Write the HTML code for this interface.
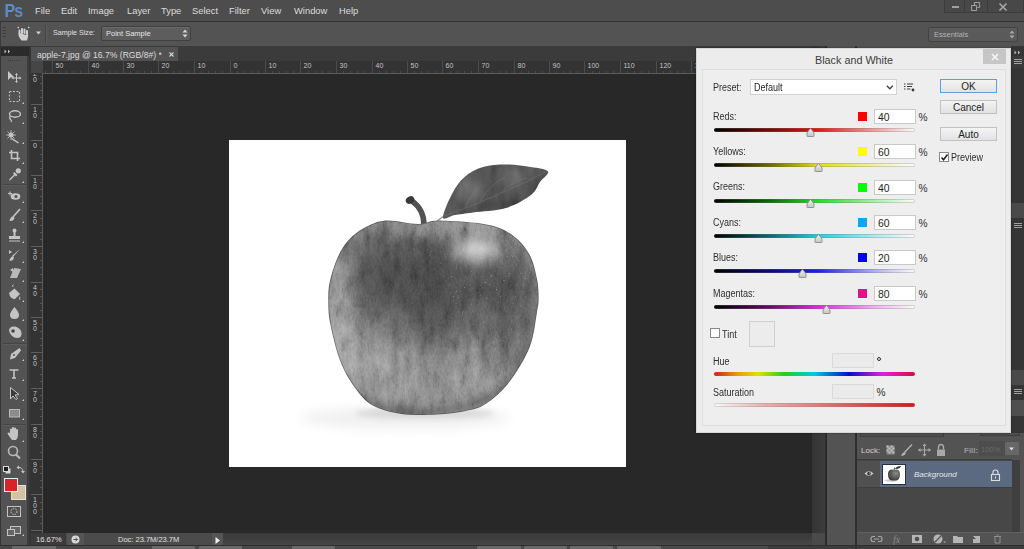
<!DOCTYPE html>
<html><head><meta charset="utf-8">
<style>
*{margin:0;padding:0;box-sizing:border-box}
html,body{width:1024px;height:549px;overflow:hidden;background:#282828;font-family:"Liberation Sans",sans-serif;position:relative}
.a{position:absolute}
.t{position:absolute;white-space:pre;line-height:1}
.menu .t{color:#dcdcdc;font-size:9.4px;top:6px}
.rl{position:absolute;font-size:7px;color:#c4c4c4;line-height:1;white-space:pre}
.dlg .t{color:#2b2b2b;font-size:9px}
svg{position:absolute;overflow:visible}
</style></head><body>
<!-- menu bar -->
<div class="a menu" style="left:0;top:0;width:1024px;height:21px;background:#4d4d4d">
  <div class="t" style="left:4.5px;top:2.8px;font-size:16px;font-weight:bold;color:#5f8cc0;letter-spacing:-0.8px;transform:scaleY(1.1);transform-origin:0 0">Ps</div>
  <div class="t" style="left:35px">File</div>
  <div class="t" style="left:61px">Edit</div>
  <div class="t" style="left:88px">Image</div>
  <div class="t" style="left:127px">Layer</div>
  <div class="t" style="left:161px">Type</div>
  <div class="t" style="left:192px">Select</div>
  <div class="t" style="left:229px">Filter</div>
  <div class="t" style="left:261px">View</div>
  <div class="t" style="left:294px">Window</div>
  <div class="t" style="left:339px">Help</div>
</div>
<div class="a" style="left:0;top:21px;width:1024px;height:1px;background:#343434"></div>
<!-- options bar -->
<div class="a" style="left:0;top:22px;width:1024px;height:24px;background:#535353"></div>
<!-- options bar content -->
<div class="a" style="left:0;top:22px;width:1px;height:24px;background:#3a3a3a"></div>
<div class="a" style="left:3px;top:27px;width:3px;height:1px;background:#3b3b3b;box-shadow:0 3px 0 #3b3b3b,0 6px 0 #3b3b3b,0 9px 0 #3b3b3b"></div>
<svg style="left:16px;top:26px" width="16" height="16" viewBox="0 0 16 16">
  <path d="M3.5 7.5 L3.5 4.5 M6 7 L6 3 M8.5 7 L8.5 3.5 M11 7.5 L11 5" stroke="#cfcfcf" stroke-width="2" stroke-linecap="round"/>
  <path d="M2.5 7.5 Q2 10 4 12.5 L5.5 14.5 L11 14.5 Q12.5 11 12 7 L11 7 L10 9 L3.5 7 Z" fill="#cfcfcf"/>
  <path d="M1 1.5 L3 0.5 L3 2.5Z M14 1.5 L12 0.5 L12 2.5Z" fill="#cfcfcf"/>
</svg>
<svg style="left:36px;top:31px" width="6" height="4"><path d="M0 0.5 L5 0.5 L2.5 3.5Z" fill="#d0d0d0"/></svg>
<div class="a" style="left:45px;top:25px;width:1px;height:18px;background:#434343;box-shadow:1px 0 0 #5f5f5f"></div>
<div class="t" style="left:53px;top:30px;font-size:7.1px;color:#e0e0e0">Sample Size:</div>
<div class="a" style="left:101px;top:26px;width:90px;height:15px;background:#5d5d5d;border:1px solid #404040;border-radius:2px;box-shadow:inset 0 1px 0 #6a6a6a"></div>
<div class="t" style="left:106px;top:30px;font-size:7.5px;color:#e6e6e6">Point Sample</div>
<svg style="left:182px;top:29px" width="6" height="10"><path d="M0.5 3.5 L3 0.5 L5.5 3.5Z M0.5 5.5 L3 8.5 L5.5 5.5Z" fill="#d8d8d8"/></svg>
<!-- Essentials -->
<div class="a" style="left:928px;top:27px;width:90px;height:15px;background:#5a5a5a;border:1px solid #424242;border-radius:2px"></div>
<div class="t" style="left:934px;top:31px;font-size:7.5px;color:#b4b4b4">Essentials</div>
<svg style="left:1009px;top:30px" width="6" height="10"><path d="M0.5 3.5 L3 0.5 L5.5 3.5Z M0.5 5.5 L3 8.5 L5.5 5.5Z" fill="#a8a8a8"/></svg>
<!-- window controls -->
<div class="a" style="left:944px;top:0;width:80px;height:13px;background:#484848;border:1px solid #3c3c3c;border-top:none"></div>
<div class="a" style="left:964px;top:0;width:1px;height:13px;background:#3c3c3c"></div>
<div class="a" style="left:987px;top:0;width:1px;height:13px;background:#3c3c3c"></div>
<div class="a" style="left:952px;top:6px;width:7px;height:2px;background:#a0a0a0"></div>
<svg style="left:971px;top:2px" width="10" height="9"><path d="M3.5 0.5 H8.5 V5.5 H6.5 M0.5 3.5 H5.5 V8.5 H0.5Z M3.5 0.5 V3.5" stroke="#a0a0a0" fill="none"/></svg>
<svg style="left:999px;top:3px" width="8" height="8"><path d="M0.5 0.5 L7.5 7.5 M7.5 0.5 L0.5 7.5" stroke="#a8a8a8" stroke-width="1.6"/></svg>
<div class="a" style="left:31px;top:46px;width:781px;height:15px;background:#3b3b3b"></div>
<div class="a" style="left:31px;top:47px;width:147px;height:14px;background:#525252"></div>
<div class="t" style="left:37px;top:51px;font-size:8.6px;color:#dcdcdc">apple-7.jpg @ 16.7% (RGB/8#) *</div>
<svg style="left:169px;top:52px" width="5" height="5"><path d="M0.5 0.5 L4.5 4.5 M4.5 0.5 L0.5 4.5" stroke="#d4d4d4" stroke-width="1.1"/></svg>
<div class="a" style="left:31px;top:61px;width:781px;height:13px;background:#333333"></div>
<div class="a" style="left:43px;top:73px;width:769px;height:1px;background:#5c5c5c"></div>
<div class="a" style="left:31px;top:61px;width:12px;height:12px;background:#464646"></div>
<div class="a" style="left:31px;top:74px;width:12px;height:459px;background:#333333"></div>
<div class="a" style="left:42px;top:73px;width:1px;height:460px;background:#5c5c5c"></div>
<div class="rl" style="left:55.5px;top:62px">50</div>
<div class="rl" style="left:91.5px;top:62px">40</div>
<div class="rl" style="left:126.5px;top:62px">30</div>
<div class="rl" style="left:161.5px;top:62px">20</div>
<div class="rl" style="left:197.5px;top:62px">10</div>
<div class="rl" style="left:233.5px;top:62px">0</div>
<div class="rl" style="left:268.5px;top:62px">10</div>
<div class="rl" style="left:303.5px;top:62px">20</div>
<div class="rl" style="left:339.5px;top:62px">30</div>
<div class="rl" style="left:375.5px;top:62px">40</div>
<div class="rl" style="left:410.5px;top:62px">50</div>
<div class="rl" style="left:445.5px;top:62px">60</div>
<div class="rl" style="left:481.5px;top:62px">70</div>
<div class="rl" style="left:517.5px;top:62px">80</div>
<div class="rl" style="left:552.5px;top:62px">90</div>
<div class="rl" style="left:587.5px;top:62px">100</div>
<div class="rl" style="left:623.5px;top:62px">110</div>
<div class="rl" style="left:659.5px;top:62px">120</div>
<div class="rl" style="left:694.5px;top:62px">130</div>
<div class="rl" style="left:729.5px;top:62px">140</div>
<div class="rl" style="left:765.5px;top:62px">150</div>
<div class="rl" style="left:801.5px;top:62px">160</div>
<div class="a" style="left:45px;top:71px;width:1px;height:2px;background:#4a4a4a"></div>
<div class="a" style="left:52px;top:61px;width:1px;height:12px;background:#4c4c4c"></div>
<div class="a" style="left:59px;top:71px;width:1px;height:2px;background:#4a4a4a"></div>
<div class="a" style="left:66px;top:71px;width:1px;height:2px;background:#4a4a4a"></div>
<div class="a" style="left:73px;top:71px;width:1px;height:2px;background:#4a4a4a"></div>
<div class="a" style="left:80px;top:71px;width:1px;height:2px;background:#4a4a4a"></div>
<div class="a" style="left:88px;top:61px;width:1px;height:12px;background:#4c4c4c"></div>
<div class="a" style="left:95px;top:71px;width:1px;height:2px;background:#4a4a4a"></div>
<div class="a" style="left:102px;top:71px;width:1px;height:2px;background:#4a4a4a"></div>
<div class="a" style="left:109px;top:71px;width:1px;height:2px;background:#4a4a4a"></div>
<div class="a" style="left:116px;top:71px;width:1px;height:2px;background:#4a4a4a"></div>
<div class="a" style="left:123px;top:61px;width:1px;height:12px;background:#4c4c4c"></div>
<div class="a" style="left:130px;top:71px;width:1px;height:2px;background:#4a4a4a"></div>
<div class="a" style="left:137px;top:71px;width:1px;height:2px;background:#4a4a4a"></div>
<div class="a" style="left:144px;top:71px;width:1px;height:2px;background:#4a4a4a"></div>
<div class="a" style="left:151px;top:71px;width:1px;height:2px;background:#4a4a4a"></div>
<div class="a" style="left:158px;top:61px;width:1px;height:12px;background:#4c4c4c"></div>
<div class="a" style="left:166px;top:71px;width:1px;height:2px;background:#4a4a4a"></div>
<div class="a" style="left:173px;top:71px;width:1px;height:2px;background:#4a4a4a"></div>
<div class="a" style="left:180px;top:71px;width:1px;height:2px;background:#4a4a4a"></div>
<div class="a" style="left:187px;top:71px;width:1px;height:2px;background:#4a4a4a"></div>
<div class="a" style="left:194px;top:61px;width:1px;height:12px;background:#4c4c4c"></div>
<div class="a" style="left:201px;top:71px;width:1px;height:2px;background:#4a4a4a"></div>
<div class="a" style="left:208px;top:71px;width:1px;height:2px;background:#4a4a4a"></div>
<div class="a" style="left:215px;top:71px;width:1px;height:2px;background:#4a4a4a"></div>
<div class="a" style="left:222px;top:71px;width:1px;height:2px;background:#4a4a4a"></div>
<div class="a" style="left:230px;top:61px;width:1px;height:12px;background:#4c4c4c"></div>
<div class="a" style="left:237px;top:71px;width:1px;height:2px;background:#4a4a4a"></div>
<div class="a" style="left:244px;top:71px;width:1px;height:2px;background:#4a4a4a"></div>
<div class="a" style="left:251px;top:71px;width:1px;height:2px;background:#4a4a4a"></div>
<div class="a" style="left:258px;top:71px;width:1px;height:2px;background:#4a4a4a"></div>
<div class="a" style="left:265px;top:61px;width:1px;height:12px;background:#4c4c4c"></div>
<div class="a" style="left:272px;top:71px;width:1px;height:2px;background:#4a4a4a"></div>
<div class="a" style="left:279px;top:71px;width:1px;height:2px;background:#4a4a4a"></div>
<div class="a" style="left:286px;top:71px;width:1px;height:2px;background:#4a4a4a"></div>
<div class="a" style="left:293px;top:71px;width:1px;height:2px;background:#4a4a4a"></div>
<div class="a" style="left:300px;top:61px;width:1px;height:12px;background:#4c4c4c"></div>
<div class="a" style="left:308px;top:71px;width:1px;height:2px;background:#4a4a4a"></div>
<div class="a" style="left:315px;top:71px;width:1px;height:2px;background:#4a4a4a"></div>
<div class="a" style="left:322px;top:71px;width:1px;height:2px;background:#4a4a4a"></div>
<div class="a" style="left:329px;top:71px;width:1px;height:2px;background:#4a4a4a"></div>
<div class="a" style="left:336px;top:61px;width:1px;height:12px;background:#4c4c4c"></div>
<div class="a" style="left:343px;top:71px;width:1px;height:2px;background:#4a4a4a"></div>
<div class="a" style="left:350px;top:71px;width:1px;height:2px;background:#4a4a4a"></div>
<div class="a" style="left:357px;top:71px;width:1px;height:2px;background:#4a4a4a"></div>
<div class="a" style="left:364px;top:71px;width:1px;height:2px;background:#4a4a4a"></div>
<div class="a" style="left:372px;top:61px;width:1px;height:12px;background:#4c4c4c"></div>
<div class="a" style="left:379px;top:71px;width:1px;height:2px;background:#4a4a4a"></div>
<div class="a" style="left:386px;top:71px;width:1px;height:2px;background:#4a4a4a"></div>
<div class="a" style="left:393px;top:71px;width:1px;height:2px;background:#4a4a4a"></div>
<div class="a" style="left:400px;top:71px;width:1px;height:2px;background:#4a4a4a"></div>
<div class="a" style="left:407px;top:61px;width:1px;height:12px;background:#4c4c4c"></div>
<div class="a" style="left:414px;top:71px;width:1px;height:2px;background:#4a4a4a"></div>
<div class="a" style="left:421px;top:71px;width:1px;height:2px;background:#4a4a4a"></div>
<div class="a" style="left:428px;top:71px;width:1px;height:2px;background:#4a4a4a"></div>
<div class="a" style="left:435px;top:71px;width:1px;height:2px;background:#4a4a4a"></div>
<div class="a" style="left:442px;top:61px;width:1px;height:12px;background:#4c4c4c"></div>
<div class="a" style="left:450px;top:71px;width:1px;height:2px;background:#4a4a4a"></div>
<div class="a" style="left:457px;top:71px;width:1px;height:2px;background:#4a4a4a"></div>
<div class="a" style="left:464px;top:71px;width:1px;height:2px;background:#4a4a4a"></div>
<div class="a" style="left:471px;top:71px;width:1px;height:2px;background:#4a4a4a"></div>
<div class="a" style="left:478px;top:61px;width:1px;height:12px;background:#4c4c4c"></div>
<div class="a" style="left:485px;top:71px;width:1px;height:2px;background:#4a4a4a"></div>
<div class="a" style="left:492px;top:71px;width:1px;height:2px;background:#4a4a4a"></div>
<div class="a" style="left:499px;top:71px;width:1px;height:2px;background:#4a4a4a"></div>
<div class="a" style="left:506px;top:71px;width:1px;height:2px;background:#4a4a4a"></div>
<div class="a" style="left:514px;top:61px;width:1px;height:12px;background:#4c4c4c"></div>
<div class="a" style="left:521px;top:71px;width:1px;height:2px;background:#4a4a4a"></div>
<div class="a" style="left:528px;top:71px;width:1px;height:2px;background:#4a4a4a"></div>
<div class="a" style="left:535px;top:71px;width:1px;height:2px;background:#4a4a4a"></div>
<div class="a" style="left:542px;top:71px;width:1px;height:2px;background:#4a4a4a"></div>
<div class="a" style="left:549px;top:61px;width:1px;height:12px;background:#4c4c4c"></div>
<div class="a" style="left:556px;top:71px;width:1px;height:2px;background:#4a4a4a"></div>
<div class="a" style="left:563px;top:71px;width:1px;height:2px;background:#4a4a4a"></div>
<div class="a" style="left:570px;top:71px;width:1px;height:2px;background:#4a4a4a"></div>
<div class="a" style="left:577px;top:71px;width:1px;height:2px;background:#4a4a4a"></div>
<div class="a" style="left:584px;top:61px;width:1px;height:12px;background:#4c4c4c"></div>
<div class="a" style="left:592px;top:71px;width:1px;height:2px;background:#4a4a4a"></div>
<div class="a" style="left:599px;top:71px;width:1px;height:2px;background:#4a4a4a"></div>
<div class="a" style="left:606px;top:71px;width:1px;height:2px;background:#4a4a4a"></div>
<div class="a" style="left:613px;top:71px;width:1px;height:2px;background:#4a4a4a"></div>
<div class="a" style="left:620px;top:61px;width:1px;height:12px;background:#4c4c4c"></div>
<div class="a" style="left:627px;top:71px;width:1px;height:2px;background:#4a4a4a"></div>
<div class="a" style="left:634px;top:71px;width:1px;height:2px;background:#4a4a4a"></div>
<div class="a" style="left:641px;top:71px;width:1px;height:2px;background:#4a4a4a"></div>
<div class="a" style="left:648px;top:71px;width:1px;height:2px;background:#4a4a4a"></div>
<div class="a" style="left:656px;top:61px;width:1px;height:12px;background:#4c4c4c"></div>
<div class="a" style="left:663px;top:71px;width:1px;height:2px;background:#4a4a4a"></div>
<div class="a" style="left:670px;top:71px;width:1px;height:2px;background:#4a4a4a"></div>
<div class="a" style="left:677px;top:71px;width:1px;height:2px;background:#4a4a4a"></div>
<div class="a" style="left:684px;top:71px;width:1px;height:2px;background:#4a4a4a"></div>
<div class="a" style="left:691px;top:61px;width:1px;height:12px;background:#4c4c4c"></div>
<div class="a" style="left:698px;top:71px;width:1px;height:2px;background:#4a4a4a"></div>
<div class="a" style="left:705px;top:71px;width:1px;height:2px;background:#4a4a4a"></div>
<div class="a" style="left:712px;top:71px;width:1px;height:2px;background:#4a4a4a"></div>
<div class="a" style="left:719px;top:71px;width:1px;height:2px;background:#4a4a4a"></div>
<div class="a" style="left:726px;top:61px;width:1px;height:12px;background:#4c4c4c"></div>
<div class="a" style="left:734px;top:71px;width:1px;height:2px;background:#4a4a4a"></div>
<div class="a" style="left:741px;top:71px;width:1px;height:2px;background:#4a4a4a"></div>
<div class="a" style="left:748px;top:71px;width:1px;height:2px;background:#4a4a4a"></div>
<div class="a" style="left:755px;top:71px;width:1px;height:2px;background:#4a4a4a"></div>
<div class="a" style="left:762px;top:61px;width:1px;height:12px;background:#4c4c4c"></div>
<div class="a" style="left:769px;top:71px;width:1px;height:2px;background:#4a4a4a"></div>
<div class="a" style="left:776px;top:71px;width:1px;height:2px;background:#4a4a4a"></div>
<div class="a" style="left:783px;top:71px;width:1px;height:2px;background:#4a4a4a"></div>
<div class="a" style="left:790px;top:71px;width:1px;height:2px;background:#4a4a4a"></div>
<div class="a" style="left:798px;top:61px;width:1px;height:12px;background:#4c4c4c"></div>
<div class="a" style="left:805px;top:71px;width:1px;height:2px;background:#4a4a4a"></div>
<div class="a" style="left:812px;top:71px;width:1px;height:2px;background:#4a4a4a"></div>
<div class="a" style="left:31px;top:74px;width:12px;height:459px;overflow:hidden">
<div class="a" style="left:9px;top:-20px;width:2px;height:1px;background:#555555"></div>
<div class="a" style="left:9px;top:-13px;width:2px;height:1px;background:#555555"></div>
<div class="a" style="left:0;top:-6px;width:11px;height:1px;background:#5f5f5f"></div>
<div class="rl" style="left:1px;top:-3px;line-height:6px;text-align:center;width:6px">2<br>0</div>
<div class="a" style="left:9px;top:2px;width:2px;height:1px;background:#555555"></div>
<div class="a" style="left:9px;top:9px;width:2px;height:1px;background:#555555"></div>
<div class="a" style="left:9px;top:16px;width:2px;height:1px;background:#555555"></div>
<div class="a" style="left:9px;top:23px;width:2px;height:1px;background:#555555"></div>
<div class="a" style="left:0;top:30px;width:11px;height:1px;background:#5f5f5f"></div>
<div class="rl" style="left:1px;top:33px;line-height:6px;text-align:center;width:6px">1<br>0</div>
<div class="a" style="left:9px;top:37px;width:2px;height:1px;background:#555555"></div>
<div class="a" style="left:9px;top:44px;width:2px;height:1px;background:#555555"></div>
<div class="a" style="left:9px;top:51px;width:2px;height:1px;background:#555555"></div>
<div class="a" style="left:9px;top:58px;width:2px;height:1px;background:#555555"></div>
<div class="a" style="left:0;top:66px;width:11px;height:1px;background:#5f5f5f"></div>
<div class="rl" style="left:1px;top:69px;line-height:6px;text-align:center;width:6px">0</div>
<div class="a" style="left:9px;top:73px;width:2px;height:1px;background:#555555"></div>
<div class="a" style="left:9px;top:80px;width:2px;height:1px;background:#555555"></div>
<div class="a" style="left:9px;top:87px;width:2px;height:1px;background:#555555"></div>
<div class="a" style="left:9px;top:94px;width:2px;height:1px;background:#555555"></div>
<div class="a" style="left:0;top:101px;width:11px;height:1px;background:#5f5f5f"></div>
<div class="rl" style="left:1px;top:104px;line-height:6px;text-align:center;width:6px">1<br>0</div>
<div class="a" style="left:9px;top:108px;width:2px;height:1px;background:#555555"></div>
<div class="a" style="left:9px;top:115px;width:2px;height:1px;background:#555555"></div>
<div class="a" style="left:9px;top:122px;width:2px;height:1px;background:#555555"></div>
<div class="a" style="left:9px;top:129px;width:2px;height:1px;background:#555555"></div>
<div class="a" style="left:0;top:136px;width:11px;height:1px;background:#5f5f5f"></div>
<div class="rl" style="left:1px;top:139px;line-height:6px;text-align:center;width:6px">2<br>0</div>
<div class="a" style="left:9px;top:144px;width:2px;height:1px;background:#555555"></div>
<div class="a" style="left:9px;top:151px;width:2px;height:1px;background:#555555"></div>
<div class="a" style="left:9px;top:158px;width:2px;height:1px;background:#555555"></div>
<div class="a" style="left:9px;top:165px;width:2px;height:1px;background:#555555"></div>
<div class="a" style="left:0;top:172px;width:11px;height:1px;background:#5f5f5f"></div>
<div class="rl" style="left:1px;top:175px;line-height:6px;text-align:center;width:6px">3<br>0</div>
<div class="a" style="left:9px;top:179px;width:2px;height:1px;background:#555555"></div>
<div class="a" style="left:9px;top:186px;width:2px;height:1px;background:#555555"></div>
<div class="a" style="left:9px;top:193px;width:2px;height:1px;background:#555555"></div>
<div class="a" style="left:9px;top:200px;width:2px;height:1px;background:#555555"></div>
<div class="a" style="left:0;top:208px;width:11px;height:1px;background:#5f5f5f"></div>
<div class="rl" style="left:1px;top:211px;line-height:6px;text-align:center;width:6px">4<br>0</div>
<div class="a" style="left:9px;top:215px;width:2px;height:1px;background:#555555"></div>
<div class="a" style="left:9px;top:222px;width:2px;height:1px;background:#555555"></div>
<div class="a" style="left:9px;top:229px;width:2px;height:1px;background:#555555"></div>
<div class="a" style="left:9px;top:236px;width:2px;height:1px;background:#555555"></div>
<div class="a" style="left:0;top:243px;width:11px;height:1px;background:#5f5f5f"></div>
<div class="rl" style="left:1px;top:246px;line-height:6px;text-align:center;width:6px">5<br>0</div>
<div class="a" style="left:9px;top:250px;width:2px;height:1px;background:#555555"></div>
<div class="a" style="left:9px;top:257px;width:2px;height:1px;background:#555555"></div>
<div class="a" style="left:9px;top:264px;width:2px;height:1px;background:#555555"></div>
<div class="a" style="left:9px;top:271px;width:2px;height:1px;background:#555555"></div>
<div class="a" style="left:0;top:278px;width:11px;height:1px;background:#5f5f5f"></div>
<div class="rl" style="left:1px;top:281px;line-height:6px;text-align:center;width:6px">6<br>0</div>
<div class="a" style="left:9px;top:286px;width:2px;height:1px;background:#555555"></div>
<div class="a" style="left:9px;top:293px;width:2px;height:1px;background:#555555"></div>
<div class="a" style="left:9px;top:300px;width:2px;height:1px;background:#555555"></div>
<div class="a" style="left:9px;top:307px;width:2px;height:1px;background:#555555"></div>
<div class="a" style="left:0;top:314px;width:11px;height:1px;background:#5f5f5f"></div>
<div class="rl" style="left:1px;top:317px;line-height:6px;text-align:center;width:6px">7<br>0</div>
<div class="a" style="left:9px;top:321px;width:2px;height:1px;background:#555555"></div>
<div class="a" style="left:9px;top:328px;width:2px;height:1px;background:#555555"></div>
<div class="a" style="left:9px;top:335px;width:2px;height:1px;background:#555555"></div>
<div class="a" style="left:9px;top:342px;width:2px;height:1px;background:#555555"></div>
<div class="a" style="left:0;top:350px;width:11px;height:1px;background:#5f5f5f"></div>
<div class="rl" style="left:1px;top:353px;line-height:6px;text-align:center;width:6px">8<br>0</div>
<div class="a" style="left:9px;top:357px;width:2px;height:1px;background:#555555"></div>
<div class="a" style="left:9px;top:364px;width:2px;height:1px;background:#555555"></div>
<div class="a" style="left:9px;top:371px;width:2px;height:1px;background:#555555"></div>
<div class="a" style="left:9px;top:378px;width:2px;height:1px;background:#555555"></div>
<div class="a" style="left:0;top:385px;width:11px;height:1px;background:#5f5f5f"></div>
<div class="rl" style="left:1px;top:388px;line-height:6px;text-align:center;width:6px">9<br>0</div>
<div class="a" style="left:9px;top:392px;width:2px;height:1px;background:#555555"></div>
<div class="a" style="left:9px;top:399px;width:2px;height:1px;background:#555555"></div>
<div class="a" style="left:9px;top:406px;width:2px;height:1px;background:#555555"></div>
<div class="a" style="left:9px;top:413px;width:2px;height:1px;background:#555555"></div>
<div class="a" style="left:0;top:420px;width:11px;height:1px;background:#5f5f5f"></div>
<div class="rl" style="left:1px;top:423px;line-height:6px;text-align:center;width:6px">1<br>0<br>0</div>
<div class="a" style="left:9px;top:428px;width:2px;height:1px;background:#555555"></div>
<div class="a" style="left:9px;top:435px;width:2px;height:1px;background:#555555"></div>
<div class="a" style="left:9px;top:442px;width:2px;height:1px;background:#555555"></div>
<div class="a" style="left:9px;top:449px;width:2px;height:1px;background:#555555"></div>
<div class="a" style="left:0;top:456px;width:11px;height:1px;background:#5f5f5f"></div>
<div class="rl" style="left:1px;top:459px;line-height:6px;text-align:center;width:6px">1<br>1<br>0</div>
<div class="a" style="left:9px;top:463px;width:2px;height:1px;background:#555555"></div>
<div class="a" style="left:9px;top:470px;width:2px;height:1px;background:#555555"></div>
</div>
<!-- toolbar -->
<div class="a" style="left:0;top:46px;width:31px;height:503px;background:#353535"></div>
<div class="a" style="left:1px;top:47px;width:28px;height:9px;background:#2b2b2b"></div>
<svg style="left:4px;top:49px" width="8" height="5"><path d="M0.5 0.5 L2.5 2.5 L0.5 4.5Z M4 0.5 L6 2.5 L4 4.5Z" fill="#bdbdbd"/></svg>
<div class="a" style="left:1px;top:56px;width:27px;height:493px;background:#535353"></div>
<div class="a" style="left:27px;top:56px;width:2px;height:493px;background:#3d3d3d"></div>
<div class="a" style="left:8px;top:60px;width:13px;height:1px;background:repeating-linear-gradient(90deg,#3c3c3c 0 1px,transparent 1px 2px)"></div>
<!-- separators -->
<div class="a" style="left:3px;top:184px;width:23px;height:1px;background:#444;box-shadow:0 1px 0 #5c5c5c"></div>
<div class="a" style="left:3px;top:343px;width:23px;height:1px;background:#444;box-shadow:0 1px 0 #5c5c5c"></div>
<div class="a" style="left:3px;top:424px;width:23px;height:1px;background:#444;box-shadow:0 1px 0 #5c5c5c"></div>
<svg style="left:0;top:0" width="31" height="549">
 <g fill="#c9c9c9" stroke="none">
  <!-- corner triangles -->
  <path d="M22 104 L24 102 L24 104Z M22 124 L24 122 L24 124Z M22 144 L24 142 L24 144Z M22 164 L24 162 L24 164Z M22 183 L24 181 L24 183Z M22 203 L24 201 L24 203Z M22 223 L24 221 L24 223Z M22 243 L24 241 L24 243Z M22 263 L24 261 L24 263Z M22 282 L24 280 L24 282Z M22 302 L24 300 L24 302Z M22 321 L24 319 L24 321Z M22 341 L24 339 L24 341Z M22 361 L24 359 L24 361Z M22 381 L24 379 L24 381Z M22 401 L24 399 L24 401Z M22 420 L24 418 L24 420Z M22 442 L24 440 L24 442Z M22 536 L24 534 L24 536Z"/>
  <!-- move -->
  <path d="M8 71 L8 80 L10.5 77.5 L14 77 Z"/>
  <path d="M16.5 74 V82 M12.5 78 H20.5" stroke="#c9c9c9" stroke-width="1"/>
  <path d="M16.5 73 L15 75 H18Z M16.5 83 L15 81 H18Z M11.5 78 L13.5 76.5 V79.5Z M21.5 78 L19.5 76.5 V79.5Z"/>
 </g>
 <g fill="none" stroke="#c4c4c4" stroke-width="1">
  <!-- marquee -->
  <path d="M9.5 91.5 H19.5 V101.5 H9.5 Z" stroke-dasharray="2 1.5"/>
  <!-- lasso -->
  <ellipse cx="15" cy="114" rx="5.5" ry="3.2" stroke-width="1.4"/>
  <path d="M10 116 Q9 119 11 120 Q12 121 11 122" stroke-width="1.2"/>
  <!-- crop -->
  <path d="M11.5 150 V158.5 H20 M9 152.5 H17.5 V161" stroke-width="1.6"/>
  <!-- brush -->
  <path d="M20 209 L13 217" stroke-width="1.6"/>
  <!-- type -->
  <path d="M9.5 370 H18.5 M14 370 V378 M12 378 H16" stroke-width="1.6"/>
 </g>
 <g fill="#c4c4c4">
  <!-- wand -->
  <path d="M12 138 L19 142.5 L18 143.5 L11 139Z"/>
  <circle cx="11" cy="135" r="2.5"/>
  <path d="M11 130 V140 M6 135 H16 M7.5 131.5 L14.5 138.5 M14.5 131.5 L7.5 138.5" stroke="#c4c4c4" stroke-width="0.8"/>
  <!-- eyedropper -->
  <circle cx="18.3" cy="170.8" r="2.6"/><path d="M14.5 172 L17.5 175 L16 176.5 L15 175.5 L10.5 180 L9 180.5 L9.5 179 L14 174.5 L13 173.5 Z"/>
  <!-- spot heal -->
  <path d="M8 193.5 H12 M10 191.5 V195.5" stroke="#c4c4c4" stroke-width="1.1"/>
  <ellipse cx="15.5" cy="196.5" rx="4.8" ry="3.3"/>
  <circle cx="16" cy="196.5" r="1.6" fill="#555"/>
  <!-- brush tip -->
  <path d="M13.5 216 Q10 217 9.5 221 Q13 221.5 14.5 218.5Z"/>
  <!-- stamp -->
  <circle cx="14.5" cy="230.5" r="2"/>
  <path d="M13.5 232 H15.5 V236 H13.5Z M9 236 H20 V239 H9Z M9 240.5 H20 V241.5 H9Z"/>
  <!-- history brush -->
  <path d="M20 249 L13 257 L12 256Z"/>
  <path d="M13 256 Q9.5 257.5 9.5 261 Q13 261 14 258Z M9 250 L12 252 L9 254Z"/>
  <!-- eraser -->
  <path d="M14 268 L21 269 L17 278 L10 278 Z" opacity="0.9"/>
  <path d="M10 270 L13 268 L13 272 Z"/>
  <!-- paint bucket -->
  <path d="M9 293 L14.5 288.5 L20 294 L15 299 Q10 299 9 293Z"/>
  <path d="M13 287 Q12 285 13.5 284.5" stroke="#c4c4c4" fill="none"/>
  <path d="M19.5 296 Q21 298 20 300 Q18.5 299 19.5 296Z"/>
  <!-- blur drop -->
  <path d="M14.5 307 Q19.5 313 19 315.5 Q18.5 319 14.5 319 Q10.5 319 10 315.5 Q9.5 313 14.5 307Z"/>
  <!-- dodge -->
  <path d="M9 331 Q9 326 15 326.5 Q21 328 21.5 333 Q22 338 17 338 Q11.5 338 9 331Z"/>
  <circle cx="13" cy="331" r="1.8" fill="#444"/>
  <!-- pen -->
  <path d="M19.5 348 L21 350.5 L15 358 L10 359.5 L11 354 Z"/>
  <circle cx="14" cy="355" r="1" fill="#555"/>
  <!-- path select -->
  <path d="M10.5 387.5 L10.5 399 L13 396 L16 399.5 L17.5 398.5 L15 395 L19 394.5 Z" fill="#3a3a3a" stroke="#c4c4c4" stroke-width="1"/>
  <!-- rectangle -->
  <rect x="9.5" y="409.5" width="10" height="7.5" fill="#8c8c8c" stroke="#b8b8b8"/>
  <!-- hand -->
  <path d="M10 433 V429.5 Q10 428.5 11 428.5 Q12 428.5 12 429.5 V432 V428 Q12 427 13 427 Q14 427 14 428 V432 V428.5 Q14 427.5 15 427.5 Q16 427.5 16 428.5 V432.5 V430 Q16 429 17 429 Q18 429 18 430 V435 Q18 438.5 16 440 H12 Q10.5 438 9 436 L7.5 433.5 Q7.5 432.5 8.5 432.5 Z"/>
  <!-- zoom -->
  <circle cx="13" cy="451" r="4.5" fill="none" stroke="#b8b8b8" stroke-width="1.6"/>
  <path d="M16 454.5 L20 458.5" stroke="#b8b8b8" stroke-width="2.2"/>
  <!-- default colors -->
  <rect x="5.5" y="468.5" width="5" height="5" fill="#d8d8d8"/>
  <rect x="3.5" y="466.5" width="5" height="5" fill="#1e1e1e" stroke="#d8d8d8" stroke-width="1"/>
  <path d="M18 467.5 Q22.5 467 23 471.5" fill="none" stroke="#c4c4c4" stroke-width="1"/>
  <path d="M16.5 467.5 L19 465.5 V469.5Z M23 473.5 L21 471 H25Z"/>
 </g>
 <!-- bg/fg colors -->
 <rect x="11.5" y="485.5" width="14" height="14" fill="#d2c3a6" stroke="#e8e2d6" stroke-width="1"/>
 <rect x="4.5" y="478.5" width="13" height="13" fill="#d8232a" stroke="#ececec" stroke-width="1"/>
 <!-- quick mask -->
 <rect x="7.5" y="506.5" width="13" height="10" fill="none" stroke="#c4c4c4"/>
 <circle cx="14" cy="511.5" r="3" fill="none" stroke="#c4c4c4" stroke-dasharray="1.5 1"/>
 <!-- screen mode -->
 <rect x="10.5" y="526.5" width="10" height="7" fill="#666" stroke="#c4c4c4"/>
 <rect x="7.5" y="529.5" width="7" height="6" fill="#666" stroke="#c4c4c4"/>
</svg>
<!-- image -->
<div class="a" style="left:229px;top:140px;width:397px;height:327px;background:#ffffff"></div>
<svg style="left:0;top:0" width="1024" height="549" viewBox="0 0 1024 549">
<defs>
 <clipPath id="ac"><path d="M418.0 224.0 C427.1 224.0 428.2 220.4 440.0 220.6 C451.8 220.8 476.8 222.4 489.0 224.9 C501.2 227.4 506.2 230.6 513.0 235.5 C519.8 240.4 525.5 247.2 529.5 254.5 C533.5 261.8 535.5 271.8 537.0 279.0 C538.5 286.2 538.6 292.5 538.6 298.0 C538.6 303.5 538.5 303.8 537.0 312.0 C535.5 320.2 534.3 335.3 529.7 347.0 C525.1 358.7 516.6 372.5 509.3 382.0 C502.0 391.5 493.3 399.0 486.0 403.8 C478.7 408.6 473.9 409.2 465.6 411.0 C457.4 412.8 447.2 414.1 436.5 414.6 C425.8 415.1 412.3 415.6 401.6 414.0 C390.9 412.4 380.2 409.7 372.4 405.3 C364.6 400.9 360.3 395.1 355.0 387.8 C349.7 380.5 344.5 372.3 340.4 361.6 C336.3 350.9 332.2 334.0 330.2 323.7 C328.2 313.4 328.4 307.0 328.3 300.0 C328.2 293.0 328.3 288.8 329.8 281.8 C331.3 274.8 334.4 264.7 337.5 257.8 C340.6 250.9 344.0 245.2 348.4 240.3 C352.8 235.4 357.5 231.6 363.7 228.3 C369.9 225.0 376.6 221.3 385.6 220.6 C394.7 219.9 408.9 224.0 418.0 224.0 Z"/></clipPath>
 <clipPath id="lc"><path d="M443.0 217.5 C442.5 214.0 448.4 200.8 452.0 194.0 C455.6 187.2 459.3 181.5 464.5 177.0 C469.7 172.5 476.1 169.1 483.0 167.0 C489.9 164.9 498.0 164.5 506.0 164.5 C514.0 164.5 524.0 165.8 531.0 167.0 C538.0 168.2 546.5 169.0 548.0 171.5 C549.5 174.0 542.8 178.1 540.0 182.0 C537.2 185.9 536.7 190.7 531.0 195.0 C525.3 199.3 515.7 205.1 506.0 208.0 C496.3 210.9 481.5 211.3 473.0 212.5 C464.5 213.7 460.0 214.2 455.0 215.0 C450.0 215.8 443.5 221.0 443.0 217.5 Z"/></clipPath>
 <filter id="blur6" x="-50%" y="-50%" width="200%" height="200%"><feGaussianBlur stdDeviation="6"/></filter>
 <filter id="blur3" x="-50%" y="-50%" width="200%" height="200%"><feGaussianBlur stdDeviation="3"/></filter>
 <filter id="blur12" x="-50%" y="-50%" width="200%" height="200%"><feGaussianBlur stdDeviation="12"/></filter>
 <filter id="tex" x="0" y="0" width="100%" height="100%">
   <feTurbulence type="fractalNoise" baseFrequency="0.1 0.04" numOctaves="4" seed="4"/>
   <feColorMatrix type="matrix" values="1.2 0 0 0 -0.1  1.2 0 0 0 -0.1  1.2 0 0 0 -0.1  0 0 0 0 1"/>
 </filter>
 <filter id="texf" x="0" y="0" width="100%" height="100%">
   <feTurbulence type="fractalNoise" baseFrequency="0.6 0.25" numOctaves="2" seed="7"/>
   <feColorMatrix type="matrix" values="1.3 0 0 0 -0.15  1.3 0 0 0 -0.15  1.3 0 0 0 -0.15  0 0 0 0 1"/>
 </filter>
 <filter id="tex2" x="0" y="0" width="100%" height="100%">
   <feTurbulence type="fractalNoise" baseFrequency="0.45 0.45" numOctaves="2" seed="9"/>
   <feColorMatrix type="matrix" values="0 0 0 0 1  0 0 0 0 1  0 0 0 0 1  0 0 0 4 -2.75"/>
 </filter>
 <filter id="blur20" x="-50%" y="-50%" width="200%" height="200%"><feGaussianBlur stdDeviation="20"/></filter>
 <radialGradient id="spk" cx="0.78" cy="0.3" r="0.55">
   <stop offset="0" stop-color="#fff"/>
   <stop offset="0.6" stop-color="#fff" stop-opacity="0.6"/>
   <stop offset="1" stop-color="#fff" stop-opacity="0"/>
 </radialGradient>
 <mask id="spm"><rect x="320" y="215" width="225" height="205" fill="url(#spk)"/></mask>
 <radialGradient id="ag" cx="0.52" cy="0.62" r="0.62">
   <stop offset="0" stop-color="#909090"/>
   <stop offset="0.55" stop-color="#7a7a7a"/>
   <stop offset="0.85" stop-color="#626262"/>
   <stop offset="1" stop-color="#8a8a8a"/>
 </radialGradient>
 <linearGradient id="band" x1="0" y1="0" x2="0" y2="1">
   <stop offset="0" stop-color="#000" stop-opacity="0"/>
   <stop offset="0.3" stop-color="#000" stop-opacity="0.22"/>
   <stop offset="0.45" stop-color="#000" stop-opacity="0.25"/>
   <stop offset="0.62" stop-color="#000" stop-opacity="0"/>
   <stop offset="0.9" stop-color="#000" stop-opacity="0.0"/>
   <stop offset="1" stop-color="#000" stop-opacity="0.18"/>
 </linearGradient>
 <linearGradient id="lg" x1="0" y1="1" x2="1" y2="0">
   <stop offset="0" stop-color="#5e5e5e"/>
   <stop offset="0.5" stop-color="#555"/>
   <stop offset="1" stop-color="#6a6a6a"/>
 </linearGradient>
</defs>
<ellipse cx="405" cy="418" rx="105" ry="11" fill="#000" opacity="0.06" filter="url(#blur6)"/>
<ellipse cx="425" cy="413" rx="70" ry="5" fill="#000" opacity="0.12" filter="url(#blur3)"/>
<path d="M424 225 C424 213 419 206 412 201" stroke="#525252" stroke-width="5.5" fill="none" stroke-linecap="round"/>
<ellipse cx="410" cy="200" rx="4.5" ry="3.5" fill="#3a3a3a" transform="rotate(-30 410 200)"/>
<path d="M437 221 L444 216" stroke="#909090" stroke-width="1.5"/>
<g clip-path="url(#ac)">
 <rect x="320" y="215" width="225" height="205" fill="#727272"/>
 <ellipse cx="430" cy="285" rx="95" ry="55" fill="#1e1e1e" opacity="0.5" filter="url(#blur20)"/>
 <ellipse cx="428" cy="300" rx="22" ry="75" fill="#1e1e1e" opacity="0.22" filter="url(#blur12)"/>
 <ellipse cx="385" cy="262" rx="30" ry="30" fill="#1e1e1e" opacity="0.2" filter="url(#blur12)"/>
 <ellipse cx="512" cy="300" rx="22" ry="45" fill="#1e1e1e" opacity="0.3" filter="url(#blur12)"/>
 <ellipse cx="341" cy="318" rx="11" ry="60" fill="#c8c8c8" opacity="0.35" filter="url(#blur6)"/>
 <ellipse cx="385" cy="360" rx="45" ry="26" fill="#c8c8c8" opacity="0.25" filter="url(#blur20)"/>
 <ellipse cx="505" cy="350" rx="22" ry="30" fill="#1e1e1e" opacity="0.18" filter="url(#blur12)"/>
 <ellipse cx="470" cy="370" rx="30" ry="20" fill="#c0c0c0" opacity="0.15" filter="url(#blur12)"/>
 <ellipse cx="450" cy="229" rx="60" ry="8" fill="#c0c0c0" opacity="0.3" filter="url(#blur6)"/>
 <rect x="320" y="215" width="225" height="205" filter="url(#tex)" style="mix-blend-mode:overlay" opacity="0.35"/>
 <rect x="320" y="215" width="225" height="205" filter="url(#texf)" style="mix-blend-mode:overlay" opacity="0.15"/>
 <g mask="url(#spm)"><rect x="320" y="215" width="225" height="205" filter="url(#tex2)" opacity="0.45"/></g>
 <ellipse cx="476" cy="250" rx="24" ry="13" fill="#fff" opacity="0.5" filter="url(#blur6)"/>
 <ellipse cx="476" cy="249" rx="12" ry="6" fill="#fff" opacity="0.3" filter="url(#blur3)"/>
 <path d="M345 388 C380 422 470 422 512 380" fill="none" stroke="#2a2a2a" stroke-width="7" opacity="0.35" filter="url(#blur3)"/>
 <path d="M500 230 C535 260 545 320 515 378" fill="none" stroke="#2a2a2a" stroke-width="6" opacity="0.25" filter="url(#blur3)"/>
 <path d="M418.0 224.0 C427.1 224.0 428.2 220.4 440.0 220.6 C451.8 220.8 476.8 222.4 489.0 224.9 C501.2 227.4 506.2 230.6 513.0 235.5 C519.8 240.4 525.5 247.2 529.5 254.5 C533.5 261.8 535.5 271.8 537.0 279.0 C538.5 286.2 538.6 292.5 538.6 298.0 C538.6 303.5 538.5 303.8 537.0 312.0 C535.5 320.2 534.3 335.3 529.7 347.0 C525.1 358.7 516.6 372.5 509.3 382.0 C502.0 391.5 493.3 399.0 486.0 403.8 C478.7 408.6 473.9 409.2 465.6 411.0 C457.4 412.8 447.2 414.1 436.5 414.6 C425.8 415.1 412.3 415.6 401.6 414.0 C390.9 412.4 380.2 409.7 372.4 405.3 C364.6 400.9 360.3 395.1 355.0 387.8 C349.7 380.5 344.5 372.3 340.4 361.6 C336.3 350.9 332.2 334.0 330.2 323.7 C328.2 313.4 328.4 307.0 328.3 300.0 C328.2 293.0 328.3 288.8 329.8 281.8 C331.3 274.8 334.4 264.7 337.5 257.8 C340.6 250.9 344.0 245.2 348.4 240.3 C352.8 235.4 357.5 231.6 363.7 228.3 C369.9 225.0 376.6 221.3 385.6 220.6 C394.7 219.9 408.9 224.0 418.0 224.0 Z" fill="none" stroke="#3c3c3c" stroke-width="1.5" opacity="0.5"/>
</g>
<g clip-path="url(#lc)">
 <rect x="435" y="160" width="120" height="60" fill="#4c4c4c"/>
 <ellipse cx="468" cy="190" rx="13" ry="12" fill="#8a8a8a" opacity="0.35" filter="url(#blur6)"/>
 <ellipse cx="515" cy="176" rx="15" ry="8" fill="#8a8a8a" opacity="0.3" filter="url(#blur6)"/>
 <ellipse cx="510" cy="205" rx="30" ry="6" fill="#222" opacity="0.3" filter="url(#blur3)"/>
 <rect x="435" y="160" width="120" height="60" filter="url(#tex)" style="mix-blend-mode:overlay" opacity="0.25"/>
 <path d="M444 216 Q490 200 546 172 M480 201 Q490 185 505 177 M500 193 Q515 180 527 178 M465 208 Q470 195 480 187" stroke="#8a8a8a" stroke-width="0.7" fill="none" opacity="0.45"/>
</g>
</svg>
<!-- vertical scrollbar -->
<div class="a" style="left:812px;top:46px;width:13px;height:487px;background:linear-gradient(90deg,#333,#3d3d3d)"></div>
<div class="a" style="left:825px;top:46px;width:2px;height:503px;background:#2b2b2b"></div>
<!-- status bar -->
<div class="a" style="left:31px;top:533px;width:781px;height:12px;background:linear-gradient(#393939,#464646)"></div>
<div class="a" style="left:31px;top:533px;width:192px;height:12px;background:#4b4b4b"></div>
<div class="a" style="left:31px;top:533px;width:35px;height:12px;background:#3b3b3b"></div>
<div class="t" style="left:36px;top:536px;font-size:7.6px;color:#e0e0e0">16.67%</div>
<div class="a" style="left:67px;top:533px;width:17px;height:12px;background:#555"></div>
<svg style="left:71px;top:535px" width="9" height="9"><circle cx="4.5" cy="4.5" r="4" fill="#d8d8d8"/><path d="M2.5 4.5 H6.5 M4.5 2.8 L6.5 4.5 L4.5 6.2" stroke="#555" stroke-width="1" fill="none"/></svg>
<div class="t" style="left:118px;top:536px;font-size:7.5px;color:#e0e0e0">Doc: 23.7M/23.7M</div>
<div class="a" style="left:212px;top:533px;width:11px;height:12px;background:#555"></div>
<svg style="left:215px;top:537px" width="6" height="7"><path d="M0.5 0 L5 3.5 L0.5 7Z" fill="#f0f0f0"/></svg>
<div class="a" style="left:812px;top:533px;width:13px;height:12px;background:#4a4a4a"></div>
<!-- bottom strip -->
<div class="a" style="left:0;top:545px;width:1024px;height:4px;background:#4a4a4a;border-top:1px solid #2e2e2e"></div>
<div class="a" style="left:12px;top:546px;width:44px;height:3px;background:#6a6a6a;border-radius:1px 1px 0 0"></div>
<div class="a" style="left:152px;top:546px;width:43px;height:3px;background:#6a6a6a;border-radius:1px 1px 0 0"></div>
<div class="a" style="left:199px;top:546px;width:43px;height:3px;background:#6a6a6a;border-radius:1px 1px 0 0"></div>
<div class="a" style="left:292px;top:546px;width:43px;height:3px;background:#6a6a6a;border-radius:1px 1px 0 0"></div>
<div class="a" style="left:477px;top:546px;width:44px;height:3px;background:#6a6a6a;border-radius:1px 1px 0 0"></div>
<div class="a" style="left:524px;top:546px;width:43px;height:3px;background:#6a6a6a;border-radius:1px 1px 0 0"></div>
<div class="a" style="left:570px;top:546px;width:43px;height:3px;background:#6a6a6a;border-radius:1px 1px 0 0"></div>
<div class="a" style="left:617px;top:546px;width:44px;height:3px;background:#6a6a6a;border-radius:1px 1px 0 0"></div>
<div class="a" style="left:768px;top:546px;width:256px;height:3px;background:#3c3c3c"></div>
<!-- panel dock -->
<div class="a" style="left:827px;top:46px;width:28px;height:499px;background:#535353"></div>
<div class="a" style="left:855px;top:46px;width:2px;height:503px;background:#2e2e2e"></div>
<!-- layers panel -->
<div class="a" style="left:857px;top:46px;width:167px;height:499px;background:#535353"></div>
<!-- blend/opacity bottoms peeking under dialog -->
<div class="a" style="left:860px;top:420px;width:84px;height:17px;background:#4e4e4e;border:1px solid #3e3e3e;border-top:none"></div>
<div class="a" style="left:980px;top:420px;width:40px;height:16px;background:#4e4e4e;border:1px solid #3e3e3e;border-top:none"></div>
<div class="a" style="left:857px;top:459px;width:155px;height:1px;background:#3c3c3c"></div>
<div class="t" style="left:861px;top:447px;font-size:8px;color:#d0d0d0">Lock:</div>
<svg style="left:884px;top:443px" width="140" height="16">
 <rect x="2.5" y="2.5" width="8" height="9" fill="#8a8a8a"/>
 <path d="M2.5 2.5 h2 v2 h-2z M6.5 2.5 h2 v2 h-2z M4.5 4.5 h2 v2 h-2z M8.5 4.5 h2 v2 h-2z M2.5 6.5 h2 v2 h-2z M6.5 6.5 h2 v2 h-2z M4.5 8.5 h2 v2 h-2z M8.5 8.5 h2 v2 h-2z" fill="#bdbdbd"/>
 <path d="M28 1.5 L20 10" stroke="#b0b0b0" stroke-width="1.4"/>
 <path d="M20.5 9 Q17.5 10 17 13 Q20 13 22 10.5Z" fill="#b0b0b0"/>
 <path d="M40.5 1 V13 M34.5 7 H46.5" stroke="#a8a8a8" stroke-width="1.1"/>
 <path d="M40.5 0.5 L38.5 3 H42.5Z M40.5 13.5 L38.5 11 H42.5Z M34 7 L36.5 5 V9Z M47 7 L44.5 5 V9Z" fill="#a8a8a8"/>
 <path d="M54.5 6.5 V4.5 Q54.5 1.5 57 1.5 Q59.5 1.5 59.5 4.5 V6.5" fill="none" stroke="#a8a8a8" stroke-width="1.4"/>
 <rect x="53" y="6.5" width="8" height="6.5" fill="#a8a8a8"/>
</svg>
<div class="t" style="left:964px;top:447px;font-size:8px;font-weight:bold;color:#9a9a9a">Fill:</div>
<div class="a" style="left:979px;top:441px;width:26px;height:15px;background:#4d4d4d"></div>
<div class="t" style="left:981px;top:446px;font-size:7.5px;color:#6a6a6a">100%</div>
<div class="a" style="left:1005px;top:442px;width:14px;height:13px;background:#676767;border-radius:1px"></div>
<svg style="left:1009px;top:447px" width="6" height="4"><path d="M0 0.5 L5 0.5 L2.5 3.5Z" fill="#dedede"/></svg>
<!-- layers list -->
<div class="a" style="left:857px;top:460px;width:155px;height:72px;background:#474747"></div>
<div class="a" style="left:857px;top:461px;width:23px;height:26px;background:#505050"></div>
<div class="a" style="left:880px;top:461px;width:132px;height:26px;background:#5b6a80"></div>
<div class="a" style="left:857px;top:487px;width:155px;height:1px;background:#3e3e3e"></div>
<svg style="left:864px;top:470px" width="10" height="7"><path d="M0.5 3.5 Q5 -1 9.5 3.5 Q5 8 0.5 3.5Z" fill="#c8c8c8"/><circle cx="5" cy="3.5" r="1.8" fill="#333"/><circle cx="5.6" cy="3" r="0.6" fill="#ddd"/></svg>
<div class="a" style="left:882px;top:464px;width:24px;height:21px;background:#fff;border:1px solid #2a3040"></div>
<svg style="left:883px;top:465px" width="22" height="19">
 <defs><radialGradient id="thg" cx="0.65" cy="0.35" r="0.7"><stop offset="0" stop-color="#8a8a8a"/><stop offset="1" stop-color="#3a3a3a"/></radialGradient></defs>
 <ellipse cx="8" cy="15.5" rx="6" ry="1.3" fill="#ccc"/>
 <path d="M5 9 Q5 4.5 9 4.5 L11 5 L13 4.5 Q17 4.5 17 9 Q17 15 13 15.5 H9 Q5 15 5 9Z" fill="url(#thg)"/>
 <path d="M11 5 L11.5 2.5" stroke="#444" stroke-width="1"/>
 <path d="M12 3.5 Q14 0.5 18 1 Q17 4 13 4Z" fill="#3c3c3c"/>
</svg>
<div class="t" style="left:914px;top:471px;font-size:8px;font-style:italic;color:#e6e6e6">Background</div>
<svg style="left:990px;top:469px" width="11" height="12"><path d="M3 5.5 V3.5 Q3 1 5.5 1 Q8 1 8 3.5 V5.5" fill="none" stroke="#dcdcdc" stroke-width="1.2"/><rect x="1.5" y="5.5" width="8" height="6" fill="none" stroke="#dcdcdc" stroke-width="1.1"/><rect x="5" y="7.5" width="1" height="2" fill="#dcdcdc"/></svg>
<!-- scrollbar right of layers -->
<div class="a" style="left:1012px;top:460px;width:8px;height:72px;background:#3f3f3f"></div>
<!-- footer -->
<div class="a" style="left:857px;top:532px;width:167px;height:1px;background:#626262"></div>
<svg style="left:866px;top:533px" width="150" height="12" fill="#a5a5a5">
 <path d="M9 3.5 H7 Q5 3.5 5 6 Q5 8.5 7 8.5 H9 M12 3.5 H14 Q16 3.5 16 6 Q16 8.5 14 8.5 H12 M8 6 H13" fill="none" stroke="#a5a5a5" stroke-width="1.2"/>
 <text x="27" y="10" font-family="Liberation Serif" font-style="italic" font-size="10" fill="#8a8a8a">fx</text>
 <rect x="46" y="2" width="10" height="8" fill="#b5b5b5"/><circle cx="51" cy="6" r="2.3" fill="#4f4f4f"/>
 <circle cx="72" cy="6" r="4.5" fill="#b5b5b5"/><path d="M69 9 L75 3" stroke="#555" stroke-width="1.2"/>
 <path d="M77.5 8.5 L80 8.5 L78.75 10Z" fill="#b5b5b5"/>
 <path d="M87 3 H91 L92 4 H97 V10 H87Z" fill="#b5b5b5"/>
 <path d="M107 3 H114 V10 H107Z" fill="#b5b5b5"/><path d="M107 3 L110 6 H107Z" fill="#555"/>
 <path d="M128 3.5 H135 M129 3.5 V10 H134 V3.5 M130.5 2 H132.5" fill="none" stroke="#8f8f8f" stroke-width="1"/>
</svg>
<!-- right strip -->
<div class="a" style="left:1011px;top:46px;width:13px;height:387px;background:#353535"></div>
<svg style="left:1014px;top:50px" width="8" height="5"><path d="M0.5 0.5 L2.5 2.5 L0.5 4.5Z M4 0.5 L6 2.5 L4 4.5Z" fill="#bdbdbd"/></svg>
<div class="a" style="left:1011px;top:56px;width:13px;height:12px;background:#3a3a3a"></div>
<div class="a" style="left:1014px;top:59px;width:8px;height:1px;background:#a0a0a0;box-shadow:0 2px 0 #a0a0a0,0 4px 0 #a0a0a0"></div>
<div class="a" style="left:1011px;top:203px;width:13px;height:15px;background:#4a4a4a"></div>
<div class="a" style="left:1014px;top:223px;width:8px;height:1px;background:#a0a0a0;box-shadow:0 2px 0 #a0a0a0,0 4px 0 #a0a0a0"></div>
<div class="a" style="left:1011px;top:370px;width:13px;height:15px;background:#4a4a4a"></div>
<div class="a" style="left:1014px;top:389px;width:8px;height:1px;background:#a0a0a0;box-shadow:0 2px 0 #a0a0a0,0 4px 0 #a0a0a0"></div>
<div class="a" style="left:1011px;top:400px;width:13px;height:16px;background:#4f4f4f"></div>
<!-- dialog -->
<div class="a" style="left:696px;top:48px;width:315px;height:385px;background:#ececec;border:1px solid #d6d6d6;box-shadow:0 0 2px rgba(0,0,0,0.4)"></div>
<div class="a" style="left:702px;top:69px;width:304px;height:357px;border:1px solid #dedede;background:#eeeeee"></div>
<div class="t" style="left:815px;top:55px;font-size:10.8px;color:#3c3c3c">Black and White</div>
<div class="a" style="left:983px;top:49px;width:23px;height:15px;background:#c6c6c6"></div>
<svg style="left:991px;top:53px" width="8" height="8"><path d="M1 1 L7 7 M7 1 L1 7" stroke="#f6f6f6" stroke-width="1.6"/></svg>
<div class="t" style="left:712.5px;top:82.9px;font-size:10px;color:#2e2e2e;transform:scaleX(0.9);transform-origin:0 0;">Preset:</div>
<div class="a" style="left:750px;top:79px;width:147px;height:16px;background:#ffffff;border:1px solid #d2d2d2"></div>
<div class="t" style="left:754px;top:82.9px;font-size:10px;color:#1e1e1e;transform:scaleX(0.9);transform-origin:0 0;">Default</div>
<svg style="left:886px;top:85px" width="8" height="5"><path d="M0.8 0.8 L3.8 3.8 L6.8 0.8" fill="none" stroke="#404040" stroke-width="1.3"/></svg>
<svg style="left:904px;top:83px" width="11" height="9"><path d="M0 1 H1.5 M0 3.5 H1.5 M0 6 H1.5 M3 1 H9 M3 3.5 H8 M3 6 H6.5" stroke="#3a3a3a" stroke-width="1.2"/><circle cx="9" cy="7" r="1.4" fill="#3a3a3a"/></svg>
<div class="a" style="left:940px;top:79px;width:57px;height:14px;background:linear-gradient(#f4f4f4,#e2e2e2);border:1px solid #5f9ddb"></div>
<div class="t" style="left:940px;top:82px;width:57px;text-align:center;font-size:10px;color:#1e1e1e">OK</div>
<div class="a" style="left:940px;top:100px;width:57px;height:14px;background:linear-gradient(#f4f4f4,#e2e2e2);border:1px solid #c2c2c2"></div>
<div class="t" style="left:940px;top:103px;width:57px;text-align:center;font-size:10px;color:#1e1e1e">Cancel</div>
<div class="a" style="left:940px;top:127px;width:57px;height:14px;background:linear-gradient(#f4f4f4,#e2e2e2);border:1px solid #c2c2c2"></div>
<div class="t" style="left:940px;top:130px;width:57px;text-align:center;font-size:10px;color:#1e1e1e">Auto</div>
<div class="a" style="left:939px;top:152px;width:10px;height:10px;background:#fff;border:1px solid #8a8a8a"></div>
<svg style="left:940px;top:153px" width="9" height="9"><path d="M1.5 4.5 L3.5 6.8 L7.5 1.5" fill="none" stroke="#202020" stroke-width="1.5"/></svg>
<div class="t" style="left:950.5px;top:153.4px;font-size:10px;color:#2e2e2e;transform:scaleX(0.9);transform-origin:0 0;">Preview</div>
<div class="t" style="left:712.5px;top:111.7px;font-size:10px;color:#2e2e2e;transform:scaleX(0.9);transform-origin:0 0;">Reds:</div>
<div class="a" style="left:858px;top:112px;width:9px;height:9px;background:#ff0000"></div>
<div class="a" style="left:874px;top:109px;width:42px;height:15px;background:#fff;border:1px solid #c9c9c9"></div>
<div class="t" style="left:878px;top:113.0px;font-size:10.4px;color:#1e1e1e;">40</div>
<div class="t" style="left:918.5px;top:112.8px;font-size:10.2px;color:#2e2e2e;">%</div>
<div class="a" style="left:714px;top:128px;width:201px;height:4px;border-radius:2px;background:linear-gradient(90deg,#000 0%,#7a0808 28%,#e01818 52%,#eea0a0 80%,#fbfbfb 100%) border-box;border:1px solid rgba(120,120,120,0.3);border-left:none"></div>
<svg style="left:806.1px;top:128px" width="9" height="9"><defs><linearGradient id="tg0" x1="0" y1="0" x2="0" y2="1"><stop offset="0" stop-color="#f2f2f2"/><stop offset="1" stop-color="#c4c4c4"/></linearGradient></defs><path d="M1 7.5 Q0.5 8.5 1.5 8.5 H7.5 Q8.5 8.5 8 7.5 V5 L5.2 1 Q4.5 0.3 3.8 1 L1 5Z" fill="url(#tg0)" stroke="#8c8c8c" stroke-width="0.9"/></svg>
<div class="t" style="left:712.5px;top:147.1px;font-size:10px;color:#2e2e2e;transform:scaleX(0.9);transform-origin:0 0;">Yellows:</div>
<div class="a" style="left:858px;top:147px;width:9px;height:9px;background:#ffff00"></div>
<div class="a" style="left:874px;top:144px;width:42px;height:15px;background:#fff;border:1px solid #c9c9c9"></div>
<div class="t" style="left:878px;top:148.3px;font-size:10.4px;color:#1e1e1e;">60</div>
<div class="t" style="left:918.5px;top:148.2px;font-size:10.2px;color:#2e2e2e;">%</div>
<div class="a" style="left:714px;top:163px;width:201px;height:4px;border-radius:2px;background:linear-gradient(90deg,#000 0%,#6e6a00 28%,#e0e010 52%,#f0f0a8 80%,#fbfbfb 100%) border-box;border:1px solid rgba(120,120,120,0.3);border-left:none"></div>
<svg style="left:814.1px;top:163px" width="9" height="9"><defs><linearGradient id="tg1" x1="0" y1="0" x2="0" y2="1"><stop offset="0" stop-color="#f2f2f2"/><stop offset="1" stop-color="#c4c4c4"/></linearGradient></defs><path d="M1 7.5 Q0.5 8.5 1.5 8.5 H7.5 Q8.5 8.5 8 7.5 V5 L5.2 1 Q4.5 0.3 3.8 1 L1 5Z" fill="url(#tg1)" stroke="#8c8c8c" stroke-width="0.9"/></svg>
<div class="t" style="left:712.5px;top:182.4px;font-size:10px;color:#2e2e2e;transform:scaleX(0.9);transform-origin:0 0;">Greens:</div>
<div class="a" style="left:858px;top:183px;width:9px;height:9px;background:#00ff00"></div>
<div class="a" style="left:874px;top:180px;width:42px;height:15px;background:#fff;border:1px solid #c9c9c9"></div>
<div class="t" style="left:878px;top:183.7px;font-size:10.4px;color:#1e1e1e;">40</div>
<div class="t" style="left:918.5px;top:183.5px;font-size:10.2px;color:#2e2e2e;">%</div>
<div class="a" style="left:714px;top:199px;width:201px;height:4px;border-radius:2px;background:linear-gradient(90deg,#000 0%,#0a6a0a 28%,#20e020 52%,#a8f0a8 80%,#fbfbfb 100%) border-box;border:1px solid rgba(120,120,120,0.3);border-left:none"></div>
<svg style="left:806.1px;top:199px" width="9" height="9"><defs><linearGradient id="tg2" x1="0" y1="0" x2="0" y2="1"><stop offset="0" stop-color="#f2f2f2"/><stop offset="1" stop-color="#c4c4c4"/></linearGradient></defs><path d="M1 7.5 Q0.5 8.5 1.5 8.5 H7.5 Q8.5 8.5 8 7.5 V5 L5.2 1 Q4.5 0.3 3.8 1 L1 5Z" fill="url(#tg2)" stroke="#8c8c8c" stroke-width="0.9"/></svg>
<div class="t" style="left:712.5px;top:217.8px;font-size:10px;color:#2e2e2e;transform:scaleX(0.9);transform-origin:0 0;">Cyans:</div>
<div class="a" style="left:858px;top:218px;width:9px;height:9px;background:#12a5ea"></div>
<div class="a" style="left:874px;top:215px;width:42px;height:15px;background:#fff;border:1px solid #c9c9c9"></div>
<div class="t" style="left:878px;top:219.0px;font-size:10.4px;color:#1e1e1e;">60</div>
<div class="t" style="left:918.5px;top:218.9px;font-size:10.2px;color:#2e2e2e;">%</div>
<div class="a" style="left:714px;top:234px;width:201px;height:4px;border-radius:2px;background:linear-gradient(90deg,#000 0%,#0a6a70 28%,#20d0e0 52%,#a8ecf0 80%,#fbfbfb 100%) border-box;border:1px solid rgba(120,120,120,0.3);border-left:none"></div>
<svg style="left:814.1px;top:234px" width="9" height="9"><defs><linearGradient id="tg3" x1="0" y1="0" x2="0" y2="1"><stop offset="0" stop-color="#f2f2f2"/><stop offset="1" stop-color="#c4c4c4"/></linearGradient></defs><path d="M1 7.5 Q0.5 8.5 1.5 8.5 H7.5 Q8.5 8.5 8 7.5 V5 L5.2 1 Q4.5 0.3 3.8 1 L1 5Z" fill="url(#tg3)" stroke="#8c8c8c" stroke-width="0.9"/></svg>
<div class="t" style="left:712.5px;top:253.1px;font-size:10px;color:#2e2e2e;transform:scaleX(0.9);transform-origin:0 0;">Blues:</div>
<div class="a" style="left:858px;top:253px;width:9px;height:9px;background:#0000ff"></div>
<div class="a" style="left:874px;top:250px;width:42px;height:15px;background:#fff;border:1px solid #c9c9c9"></div>
<div class="t" style="left:878px;top:254.4px;font-size:10.4px;color:#1e1e1e;">20</div>
<div class="t" style="left:918.5px;top:254.3px;font-size:10.2px;color:#2e2e2e;">%</div>
<div class="a" style="left:714px;top:269px;width:201px;height:4px;border-radius:2px;background:linear-gradient(90deg,#000 0%,#0a0a78 28%,#2020e8 52%,#b0b0f0 80%,#fbfbfb 100%) border-box;border:1px solid rgba(120,120,120,0.3);border-left:none"></div>
<svg style="left:798.1px;top:269px" width="9" height="9"><defs><linearGradient id="tg4" x1="0" y1="0" x2="0" y2="1"><stop offset="0" stop-color="#f2f2f2"/><stop offset="1" stop-color="#c4c4c4"/></linearGradient></defs><path d="M1 7.5 Q0.5 8.5 1.5 8.5 H7.5 Q8.5 8.5 8 7.5 V5 L5.2 1 Q4.5 0.3 3.8 1 L1 5Z" fill="url(#tg4)" stroke="#8c8c8c" stroke-width="0.9"/></svg>
<div class="t" style="left:712.5px;top:288.5px;font-size:10px;color:#2e2e2e;transform:scaleX(0.9);transform-origin:0 0;">Magentas:</div>
<div class="a" style="left:858px;top:289px;width:9px;height:9px;background:#eb0c8a"></div>
<div class="a" style="left:874px;top:286px;width:42px;height:15px;background:#fff;border:1px solid #c9c9c9"></div>
<div class="t" style="left:878px;top:289.8px;font-size:10.4px;color:#1e1e1e;">80</div>
<div class="t" style="left:918.5px;top:289.6px;font-size:10.2px;color:#2e2e2e;">%</div>
<div class="a" style="left:714px;top:305px;width:201px;height:4px;border-radius:2px;background:linear-gradient(90deg,#000 0%,#6a0a6a 28%,#e028e0 52%,#f0b0f0 80%,#fbfbfb 100%) border-box;border:1px solid rgba(120,120,120,0.3);border-left:none"></div>
<svg style="left:822.1px;top:305px" width="9" height="9"><defs><linearGradient id="tg5" x1="0" y1="0" x2="0" y2="1"><stop offset="0" stop-color="#f2f2f2"/><stop offset="1" stop-color="#c4c4c4"/></linearGradient></defs><path d="M1 7.5 Q0.5 8.5 1.5 8.5 H7.5 Q8.5 8.5 8 7.5 V5 L5.2 1 Q4.5 0.3 3.8 1 L1 5Z" fill="url(#tg5)" stroke="#8c8c8c" stroke-width="0.9"/></svg>
<div class="a" style="left:710px;top:328px;width:10px;height:10px;background:#fff;border:1px solid #8a8a8a"></div>
<div class="t" style="left:722px;top:329.9px;font-size:10px;color:#2e2e2e;transform:scaleX(0.9);transform-origin:0 0;">Tint</div>
<div class="a" style="left:749px;top:321px;width:26px;height:26px;border:1px solid #cfcfcf;background:#ececec"></div>
<div class="t" style="left:712.5px;top:356.9px;font-size:10px;color:#2e2e2e;transform:scaleX(0.9);transform-origin:0 0;">Hue</div>
<div class="a" style="left:832px;top:353px;width:42px;height:15px;border:1px solid #dadada;background:#ebebeb"></div>
<div class="a" style="left:877px;top:357px;width:4px;height:4px;border:1px solid #2e2e2e;border-radius:50%"></div>
<div class="a" style="left:714px;top:372px;width:201px;height:4px;border-radius:2px;background:linear-gradient(90deg,#d02020 0%,#e8a000 12%,#e0e000 22%,#20d020 35%,#00c8e0 50%,#0010c8 67%,#e020e0 84%,#d01040 100%) border-box"></div>
<div class="t" style="left:712.5px;top:387.9px;font-size:10px;color:#2e2e2e;transform:scaleX(0.9);transform-origin:0 0;">Saturation</div>
<div class="a" style="left:832px;top:384px;width:42px;height:15px;border:1px solid #dadada;background:#ebebeb"></div>
<div class="t" style="left:876.5px;top:388.0px;font-size:10.2px;color:#2e2e2e;">%</div>
<div class="a" style="left:714px;top:403px;width:201px;height:4px;border-radius:2px;background:linear-gradient(90deg,#f8f8f8 0%,#e8b0b0 25%,#d86060 65%,#d01818 100%) border-box;border:1px solid rgba(140,140,140,0.3)"></div>
</body></html>
